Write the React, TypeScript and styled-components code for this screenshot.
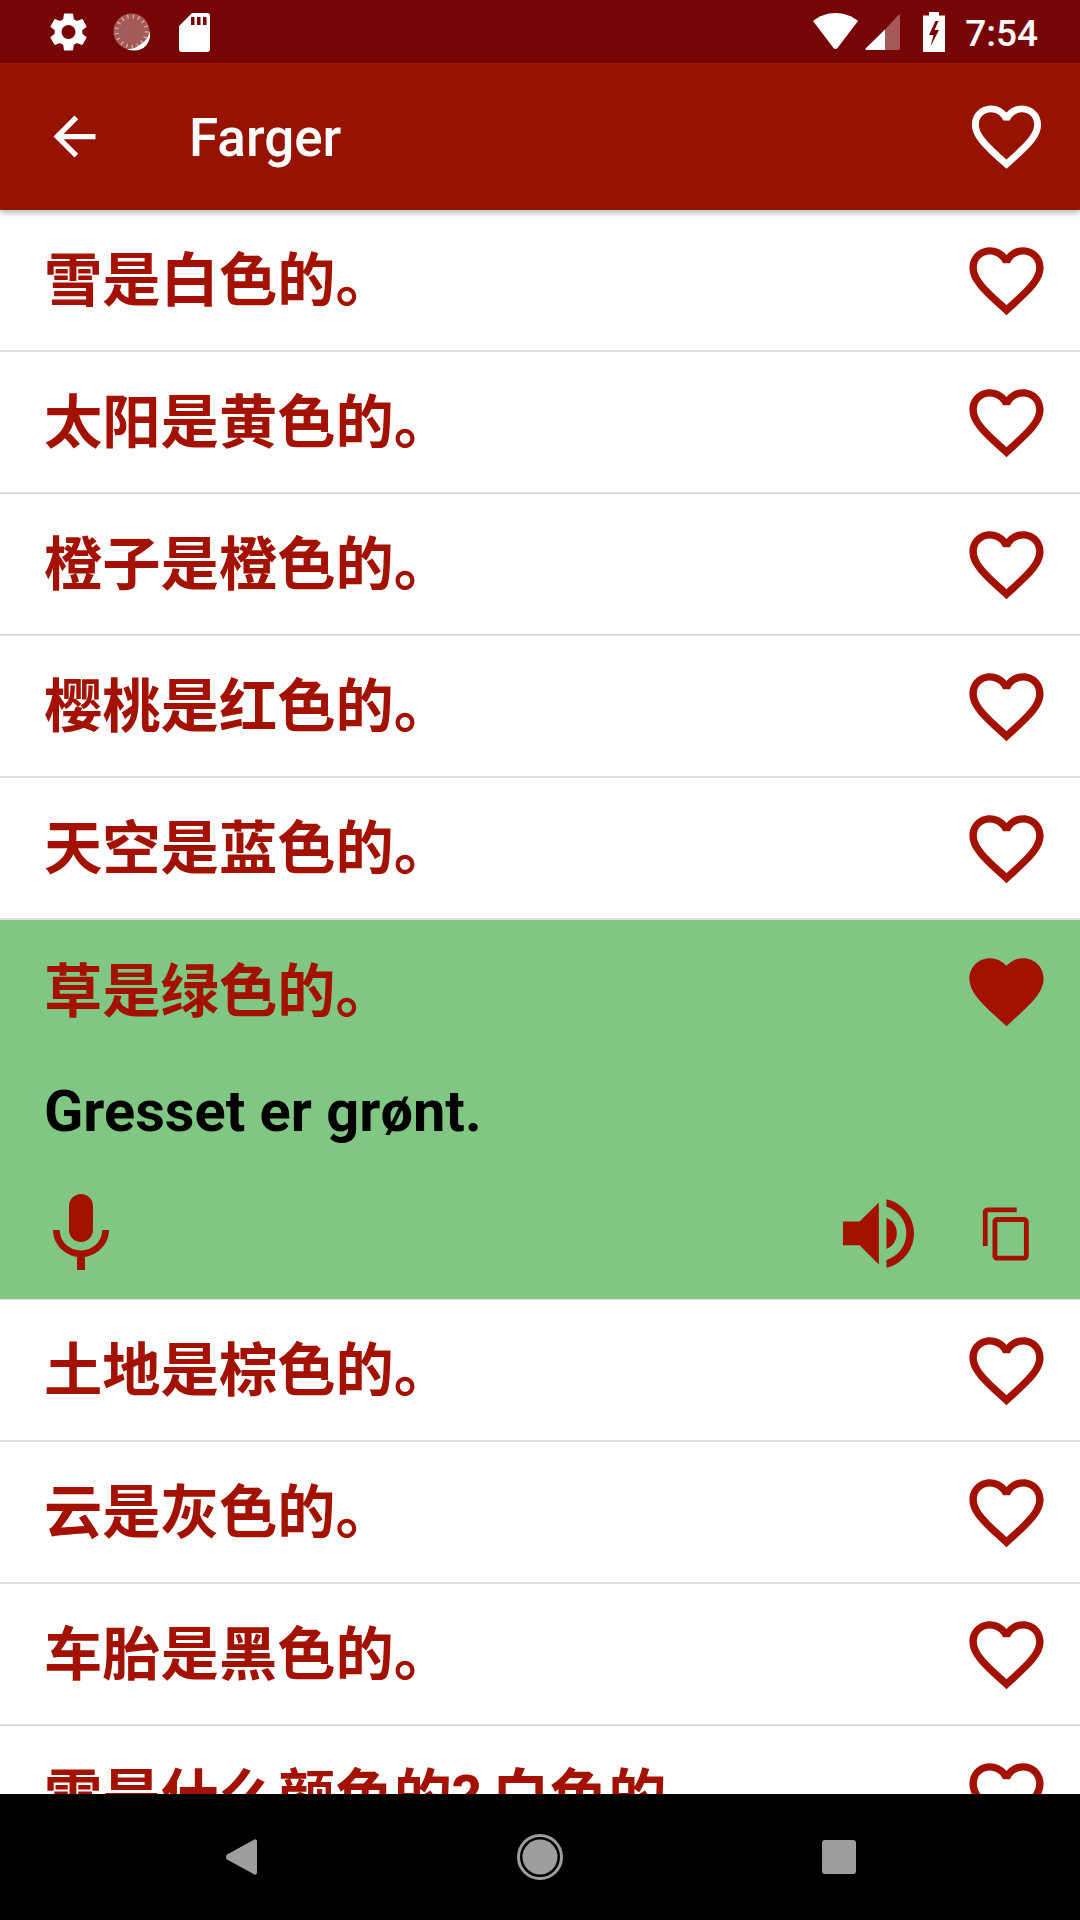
import React from "react";
import styled, { createGlobalStyle } from "styled-components";

const RED = "#a31200";

const Global = createGlobalStyle`
  html, body { margin: 0; padding: 0; background: #fff; }
  * { box-sizing: border-box; }
`;

const Screen = styled.div`
  width: 1080px;
  height: 1920px;
  display: flex;
  flex-direction: column;
  overflow: hidden;
  background: #fff;
  font-family: Roboto, "Noto Sans CJK SC", sans-serif;
`;

const StatusBar = styled.div`
  height: 63px;
  flex: none;
  background: #770505;
  display: flex;
  align-items: center;
  padding: 0 42px 0 50px;
  color: #fff;
`;

const StatusLeft = styled.div`
  display: flex;
  align-items: center;
  flex: 1;
`;

const StatusRight = styled.div`
  display: flex;
  align-items: center;
`;

const Clock = styled.span`
  font-size: 37px;
  font-weight: 500;
  margin-left: 20px;
  padding-top: 4px;
  line-height: 59px;
`;

const StatusIcon = styled.svg<{ $w: number; $ml?: number }>`
  display: block;
  width: ${(p) => p.$w}px;
  height: 40px;
  margin-left: ${(p) => p.$ml ?? 0}px;
  fill: #fff;
`;

const Toolbar = styled.header`
  height: 147px;
  flex: none;
  background: #961300;
  display: flex;
  align-items: center;
  padding: 0 32px 0 43px;
  color: #fff;
  position: relative;
  z-index: 2;
  box-shadow: 0 3px 6px rgba(0, 0, 0, 0.28);
`;

const ToolbarTitle = styled.h1`
  margin: 0 0 0 83px;
  padding-top: 4px;
  flex: 1;
  font-size: 53px;
  font-weight: 500;
  line-height: 1;
`;

const Icon = styled.svg<{ $size: number }>`
  display: block;
  flex: none;
  width: ${(p) => p.$size}px;
  height: ${(p) => p.$size}px;
  fill: currentColor;
`;

const List = styled.main`
  flex: 1;
  min-height: 0;
  overflow: hidden;
  color: ${RED};
`;

const Row = styled.div`
  height: 142px;
  display: flex;
  align-items: center;
  padding: 0 29px 0 44px;
  border-bottom: 2px solid #dedede;
`;

const Expanded = styled.div`
  height: 380px;
  background: #81c784;
  border-bottom: 1px solid #dedede;
  display: flex;
  flex-direction: column;
`;

const ExpandedHead = styled.div`
  height: 142px;
  flex: none;
  display: flex;
  align-items: center;
  padding: 0 29px 0 44px;
`;

const Sentence = styled.div`
  flex: 1;
  font-size: 58.3px;
  font-weight: 700;
  line-height: 1;
  padding-top: 3px;
  word-spacing: -4px;
  white-space: nowrap;
  color: ${RED};
`;

const Translation = styled.div`
  height: 98px;
  flex: none;
  padding-left: 44px;
  display: flex;
  align-items: center;
  font-size: 57.75px;
  font-weight: 700;
  color: #000;
`;

const Actions = styled.div`
  flex: 1;
  display: flex;
  align-items: center;
  padding: 8px 44px 0 33px;
`;

const ActionSpacer = styled.div`
  flex: 1;
`;

const Speaker = styled.svg`
  display: block;
  width: 71px;
  height: 69px;
  fill: currentColor;
  margin-right: 64px;
`;

const NavBar = styled.nav`
  height: 126px;
  flex: none;
  background: #000;
  display: flex;
  align-items: center;
  position: relative;
  z-index: 3;
  padding-left: 226px;
`;

const NavIcon = styled.svg<{ $w: number; $ml: number }>`
  display: block;
  width: ${(p) => p.$w}px;
  height: 48px;
  margin-left: ${(p) => p.$ml}px;
  fill: #9e9e9e;
`;

const HEART_OUTLINE =
  "M16.5 3c-1.74 0-3.41.81-4.5 2.09C10.91 3.81 9.24 3 7.5 3 4.42 3 2 5.42 2 8.5c0 3.78 3.4 6.86 8.55 11.54L12 21.35l1.45-1.32C18.6 15.36 22 12.28 22 8.5 22 5.42 19.58 3 16.5 3zm-4.4 15.55l-.1.1-.1-.1C7.14 14.24 4 11.39 4 8.5 4 6.5 5.5 5 7.5 5c1.54 0 3.04.99 3.57 2.36h1.87C13.46 5.99 14.96 5 16.5 5c2 0 3.5 1.5 3.5 3.5 0 2.89-3.14 5.74-7.9 10.05z";
const HEART_FILLED =
  "M12 21.35l-1.45-1.32C5.4 15.36 2 12.28 2 8.5 2 5.42 4.42 3 7.5 3c1.74 0 3.41.81 4.5 2.09C13.09 3.81 14.76 3 16.5 3 19.58 3 22 5.42 22 8.5c0 3.78-3.4 6.86-8.55 11.54L12 21.35z";

const Heart = ({ filled = false, size = 89 }: { filled?: boolean; size?: number }) => (
  <Icon $size={size} viewBox="0 0 24 24">
    <path d={filled ? HEART_FILLED : HEART_OUTLINE} />
  </Icon>
);

const before = [
  "雪是白色的。",
  "太阳是黄色的。",
  "橙子是橙色的。",
  "樱桃是红色的。",
  "天空是蓝色的。",
];
const after = [
  "土地是棕色的。",
  "云是灰色的。",
  "车胎是黑色的。",
  "雪是什么颜色的? 白色的。",
];

const SentenceRow = ({ text }: { text: string }) => (
  <Row>
    <Sentence>{text}</Sentence>
    <Heart />
  </Row>
);

export default function App() {
  return (
    <Screen>
      <Global />
      <StatusBar>
        <StatusLeft>
          <StatusIcon $w={37} viewBox="2.4 2 19.2 20">
            <path d="M19.14 12.94c.04-.3.06-.61.06-.94 0-.32-.02-.64-.07-.94l2.03-1.58c.18-.14.23-.41.12-.61l-1.92-3.32c-.12-.22-.37-.29-.59-.22l-2.39.96c-.5-.38-1.03-.7-1.62-.94l-.36-2.54c-.04-.24-.24-.41-.48-.41h-3.84c-.24 0-.43.17-.47.41l-.36 2.54c-.59.24-1.13.57-1.62.94l-2.39-.96c-.22-.08-.47 0-.59.22L2.74 8.87c-.12.21-.08.47.12.61l2.03 1.58c-.05.3-.09.63-.09.94s.02.64.07.94l-2.03 1.58c-.18.14-.23.41-.12.61l1.92 3.32c.12.22.37.29.59.22l2.39-.96c.5.38 1.03.7 1.62.94l.36 2.54c.05.24.24.41.48.41h3.84c.24 0 .44-.17.47-.41l.36-2.54c.59-.24 1.13-.56 1.62-.94l2.39.96c.22.08.47 0 .59-.22l1.92-3.32c.12-.22.07-.47-.12-.61l-2.01-1.58zM12 15.6c-1.98 0-3.6-1.62-3.6-3.6s1.62-3.6 3.6-3.6 3.6 1.62 3.6 3.6-1.62 3.6-3.6 3.6z" />
          </StatusIcon>
          <StatusIcon $w={38} $ml={26} viewBox="0 0 38 40">
            <circle cx="18.5" cy="19.5" r="18" fill="#fff" fillOpacity="0.34" />
            <path d="M28 32c5-3 8-7.500 8.500-13 2 7-1.500 15-8 18-5 2-10 2-15 0 5.500.5 10.500-1.500 14.500-5z" />
            <circle cx="18.500" cy="19.500" r="15" fill="none" stroke="#fff" strokeOpacity="0.55" strokeWidth="4" strokeDasharray="1.200 4.300" />
          </StatusIcon>
          <StatusIcon $w={31} $ml={28} viewBox="0 0 31 40">
            <path d="M13 1h15a3 3 0 0 1 3 3v33a3 3 0 0 1-3 3H3a3 3 0 0 1-3-3V14zM12 5v8h3.500V5zM18 5v8h3.500V5zM24 5v8h3.500V5z" fillRule="evenodd" />
          </StatusIcon>
        </StatusLeft>
        <StatusRight>
          <StatusIcon $w={45} viewBox="0 0 45 40">
            <path d="M22.500 1C14 1 6 4 0 9l20.500 27c1 1.300 3 1.300 4 0L45 9C39 4 31 1 22.500 1z" />
          </StatusIcon>
          <StatusIcon $w={35} $ml={7} viewBox="0 0 35 40">
            <path d="M20 17.500V38H1.500a1 1 0 0 1-.7-1.800z" />
            <path d="M20 17.500 33 3.500a1 1 0 0 1 2 .700V36a2 2 0 0 1-2 2H20z" fillOpacity="0.34" />
          </StatusIcon>
          <StatusIcon $w={22} $ml={23} viewBox="0 0 22 40">
            <path
              fillRule="evenodd"
              d="M6 0h10v3.500h6V40H0V3.500h6zM12.500 9 6 23h4.500L7.500 34.500 16 18h-4.500l4-9z"
            />
          </StatusIcon>
          <Clock>7:54</Clock>
        </StatusRight>
      </StatusBar>

      <Toolbar>
        <Icon $size={63} viewBox="0 0 24 24">
          <path d="M20 11H7.830l5.590-5.590L12 4l-8 8 8 8 1.410-1.410L7.830 13H20v-2z" />
        </Icon>
        <ToolbarTitle>Farger</ToolbarTitle>
        <Heart size={83} />
      </Toolbar>

      <List>
        {before.map((t) => (
          <SentenceRow key={t} text={t} />
        ))}
        <Expanded>
          <ExpandedHead>
            <Sentence>草是绿色的。</Sentence>
            <Heart filled />
          </ExpandedHead>
          <Translation>Gresset er grønt.</Translation>
          <Actions>
            <Icon $size={96} viewBox="0 0 24 24">
              <path d="M12 14c1.660 0 2.990-1.340 2.990-3L15 5c0-1.660-1.340-3-3-3S9 3.340 9 5v6c0 1.660 1.340 3 3 3zm5.300-3c0 3-2.540 5.100-5.300 5.100S6.700 14 6.700 11H5c0 3.410 2.720 6.230 6 6.720V21h2v-3.280c3.280-.48 6-3.300 6-6.720h-1.700z" />
            </Icon>
            <ActionSpacer />
            <Speaker viewBox="68 807 214 207">
              <path d="M68 874H118L176 817V1004L118 946H68Z" />
              <path d="M199 864C218 870 230 888 230 910C230 932 218 950 199 957Z" />
              <path d="M199 807C247 818 282 860 282 910C282 960 247 1003 199 1014V990C234 980 259 948 259 910C259 872 234 840 199 830Z" />
            </Speaker>
            <Icon $size={58} viewBox="0 0 24 24">
              <path d="M16 1H4c-1.100 0-2 .9-2 2v14h2V3h12V1zm3 4H8c-1.100 0-2 .9-2 2v14c0 1.100.9 2 2 2h11c1.100 0 2-.9 2-2V7c0-1.100-.9-2-2-2zm0 16H8V7h11v14z" />
            </Icon>
          </Actions>
        </Expanded>
        {after.map((t) => (
          <SentenceRow key={t} text={t} />
        ))}
      </List>

      <NavBar>
        <NavIcon $w={31} $ml={0} viewBox="0 0 31 48">
          <path d="M27.500 7c1.400-1.300 3.500-.5 3.500 1.500v31c0 2-2.100 2.800-3.500 1.500L1 26.500c-1.300-1.200-1.300-3.800 0-5z" />
        </NavIcon>
        <NavIcon $w={46} $ml={260} viewBox="0 0 46 48">
          <circle cx="23" cy="24" r="17.500" />
          <circle cx="23" cy="24" r="21.500" fill="none" stroke="#9e9e9e" strokeWidth="3" />
        </NavIcon>
        <NavIcon $w={34} $ml={259} viewBox="0 0 34 48">
          <rect x="0" y="7" width="34" height="34" rx="3" />
        </NavIcon>
      </NavBar>
    </Screen>
  );
}
